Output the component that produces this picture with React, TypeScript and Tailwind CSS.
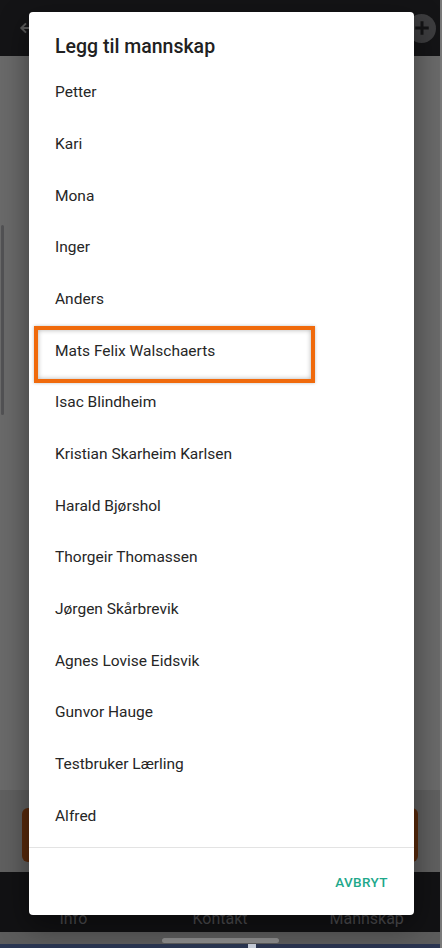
const people = [
  'Petter',
  'Kari',
  'Mona',
  'Inger',
  'Anders',
  'Mats Felix Walschaerts',
  'Isac Blindheim',
  'Kristian Skarheim Karlsen',
  'Harald Bjørshol',
  'Thorgeir Thomassen',
  'Jørgen Skårbrevik',
  'Agnes Lovise Eidsvik',
  'Gunvor Hauge',
  'Testbruker Lærling',
  'Alfred',
];

function AddCrewDialog() {
  return (
    <div className="absolute left-[29px] top-[12px] flex h-[903px] w-[385px] flex-col rounded-[4px] bg-white shadow-[0_10px_30px_rgba(0,0,0,0.45)]">
      <h2 className="px-[26px] pt-[23px] pb-[8px] text-[19.5px] font-medium leading-[24px] text-[#212121]">
        Legg til mannskap
      </h2>
      <ul className="flex-1 pb-[3px]">
        {people.map((name) => (
          <li key={name} className="relative flex h-[51.7px] items-center px-[26px] text-[15.5px] text-[#262626]">
            {name}
            {name === 'Mats Felix Walschaerts' && (
              <div className="absolute left-[5px] top-[1px] h-[57px] w-[281px] border-4 border-[#f06a0c] shadow-[inset_0_0_5px_rgba(0,0,0,0.3),0_0_3px_rgba(0,0,0,0.25)]" />
            )}
          </li>
        ))}
      </ul>
      <div className="flex h-[68px] items-center justify-end border-t border-[#e3e3e3] px-[26px] pt-[2px]">
        <button className="text-[13.5px] font-medium tracking-[0.03em] text-[#1ea88b]">AVBRYT</button>
      </div>
    </div>
  );
}

export default function App() {
  return (
    <div className="relative h-[948px] w-[442px] overflow-hidden bg-[#5c5c5c] font-['Roboto',sans-serif]">
      <div className="flex h-full flex-col border-r-2 border-[#7a7a7a]">
        <header className="flex h-[56px] shrink-0 items-center justify-between bg-[#141416] pl-[18px] pr-[4px]">
          <svg className="h-[16px] w-[16px]" viewBox="0 0 24 24" fill="none" stroke="#5a5a5a" strokeWidth="3">
            <path d="M20 12H5M12 5l-7 7 7 7" />
          </svg>
          <div className="flex h-[29px] w-[29px] items-center justify-center rounded-full bg-[#3d3d3f]">
            <svg className="h-[18px] w-[18px]" viewBox="0 0 24 24" fill="none" stroke="#141416" strokeWidth="4">
              <path d="M12 3v18M3 12h18" />
            </svg>
          </div>
        </header>

        <main className="flex flex-1 flex-col bg-[#6a6a6a]">
          <div className="ml-[1px] mt-[169px] h-[190px] w-[3px] rounded-full bg-[#525254]" />
          <div className="flex-1" />
          <div className="h-[82px] bg-[#606060] px-[22px] pt-[18px]">
            <div className="h-[54px] rounded-md bg-[#5a2a0c]" />
          </div>
        </main>

        <nav className="grid h-[60px] shrink-0 grid-cols-3 bg-[#121214] text-[16px] text-[#4f4f52]">
          <span className="flex items-end justify-center pb-[1px]">Info</span>
          <span className="flex items-end justify-center pb-[1px]">Kontakt</span>
          <span className="flex items-end justify-center pb-[1px]">Mannskap</span>
        </nav>

        <div className="flex h-[12px] shrink-0 items-end justify-center bg-[#5c5c5c] pr-[2px]">
          <div className="mb-[1px] ml-[2px] h-[5px] w-[117px] rounded-full bg-[#8c8c8c]" />
        </div>
        <div className="flex h-[4px] shrink-0">
          <div className="w-[248px] bg-[#2a3652]" />
          <div className="w-[8px] bg-[#c9d0dc]" />
          <div className="flex-1 bg-[#2a3450]" />
        </div>
      </div>

      <AddCrewDialog />
    </div>
  );
}
